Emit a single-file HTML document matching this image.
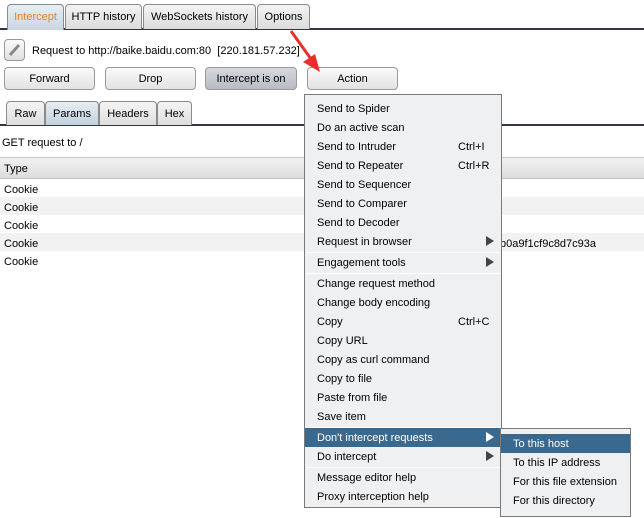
<!DOCTYPE html><html><head><style>
*{margin:0;padding:0;box-sizing:border-box}
body{width:644px;height:518px;background:#fff;font-family:"Liberation Sans",sans-serif;font-size:11px;color:#000;position:relative;overflow:hidden}
.a{position:absolute;white-space:nowrap}
.tab{position:absolute;top:4px;height:25px;border:1px solid #8a8a8a;border-bottom:none;border-radius:4px 4px 0 0;background:linear-gradient(#f4f4f4,#dcdcdc);text-align:center;line-height:24px;font-size:11px}
.btn{position:absolute;top:67px;height:23px;border:1px solid #9a9a9a;border-radius:4px;background:linear-gradient(#fafafa,#e2e2e2);text-align:center;line-height:22px}
.st{position:absolute;top:101px;height:24px;border:1px solid #8a8a8a;border-bottom:none;border-radius:4px 4px 0 0;background:linear-gradient(#f4f4f4,#dedede);text-align:center;line-height:24px}
.row{position:absolute;left:0;width:644px;height:18px;line-height:22px;padding-left:4px}
.menu{position:absolute;background:#eef0f2;border:1px solid #7a7a7a}
.mi{position:absolute;left:0;right:0;height:19px;line-height:21px;padding-left:12px}
.sep{position:absolute;left:1px;right:1px;height:1px;background:#b5b5b5;border-bottom:1px solid #fff}
.hl{background:#39698e;color:#fff}
.k{position:absolute;left:153px}
.ar{position:absolute;left:181px;top:4px;width:0;height:0;border-left:8px solid #444;border-top:5px solid transparent;border-bottom:5px solid transparent}
</style></head><body>
<div class="a" style="left:0;top:28px;width:644px;height:2px;background:#2f3640"></div>
<div class="tab" style="left:7px;width:57px;background:linear-gradient(#e8eef4,#c8d6e2);color:#e0862a;height:26px">Intercept</div>
<div class="tab" style="left:65px;width:77px">HTTP history</div>
<div class="tab" style="left:143px;width:113px">WebSockets history</div>
<div class="tab" style="left:257px;width:53px">Options</div>
<div class="a" style="left:4px;top:39px;width:21px;height:22px;border:1px solid #999;border-radius:4px;background:linear-gradient(#fafafa,#e0e0e0)"><svg width="19" height="20"><path d="M5 15 L14 5" stroke="#888" stroke-width="3"/></svg></div>
<div class="a" style="left:32px;top:45px">Request to http://baike.baidu.com:80&nbsp; [220.181.57.232]</div>
<div class="btn" style="left:4px;width:91px">Forward</div>
<div class="btn" style="left:105px;width:91px">Drop</div>
<div class="btn" style="left:205px;width:92px;background:linear-gradient(#d6d8dc,#b8bcc2)">Intercept is on</div>
<div class="btn" style="left:307px;width:91px">Action</div>
<svg class="a" style="left:285px;top:28px" width="45" height="50"><path d="M6 3 L26 31" stroke="#e8302a" stroke-width="3"/><path d="M35 44 L18 34 L30 26 Z" fill="#e8302a"/></svg>
<div class="a" style="left:0;top:124px;width:644px;height:2px;background:#2f3640"></div>
<div class="st" style="left:6px;width:39px">Raw</div>
<div class="st" style="left:45px;width:54px;background:linear-gradient(#e6edf3,#c2d2df)">Params</div>
<div class="st" style="left:99px;width:58px">Headers</div>
<div class="st" style="left:157px;width:35px">Hex</div>
<div class="a" style="left:2px;top:137px">GET request to /</div>
<div class="a" style="left:0;top:157px;width:644px;height:22px;background:linear-gradient(#f2f2f2,#dcdcdc);border-top:1px solid #c8c8c8;border-bottom:1px solid #c0c0c0;padding-left:4px;line-height:22px">Type</div>
<div class="row" style="top:179px">Cookie</div>
<div class="row" style="top:197px;background:#f2f2f2">Cookie</div>
<div class="row" style="top:215px">Cookie</div>
<div class="row" style="top:233px;background:#f2f2f2">Cookie<span class="a" style="left:500px;top:0">b0a9f1cf9c8d7c93a</span></div>
<div class="row" style="top:251px">Cookie</div>
<div class="menu" style="left:304px;top:94px;width:198px;height:414px">
<div class="mi" style="top:4px">Send to Spider</div>
<div class="mi" style="top:23px">Do an active scan</div>
<div class="mi" style="top:42px">Send to Intruder<span class="k">Ctrl+I</span></div>
<div class="mi" style="top:61px">Send to Repeater<span class="k">Ctrl+R</span></div>
<div class="mi" style="top:80px">Send to Sequencer</div>
<div class="mi" style="top:99px">Send to Comparer</div>
<div class="mi" style="top:118px">Send to Decoder</div>
<div class="mi" style="top:137px">Request in browser<span class="ar"></span></div>
<div class="sep" style="top:157px"></div>
<div class="mi" style="top:158px">Engagement tools<span class="ar"></span></div>
<div class="sep" style="top:178px"></div>
<div class="mi" style="top:179px">Change request method</div>
<div class="mi" style="top:198px">Change body encoding</div>
<div class="mi" style="top:217px">Copy<span class="k">Ctrl+C</span></div>
<div class="mi" style="top:236px">Copy URL</div>
<div class="mi" style="top:255px">Copy as curl command</div>
<div class="mi" style="top:274px">Copy to file</div>
<div class="mi" style="top:293px">Paste from file</div>
<div class="mi" style="top:312px">Save item</div>
<div class="sep" style="top:332px"></div>
<div class="mi hl" style="top:333px">Don't intercept requests<span class="ar" style="border-left-color:#fff"></span></div>
<div class="mi" style="top:352px">Do intercept<span class="ar"></span></div>
<div class="sep" style="top:372px"></div>
<div class="mi" style="top:373px">Message editor help</div>
<div class="mi" style="top:392px">Proxy interception help</div>
</div>
<div class="menu" style="left:500px;top:428px;width:131px;height:89px">
<div class="mi hl" style="top:5px">To this host</div>
<div class="mi" style="top:24px">To this IP address</div>
<div class="mi" style="top:43px">For this file extension</div>
<div class="mi" style="top:62px">For this directory</div>
</div>
</body></html>
